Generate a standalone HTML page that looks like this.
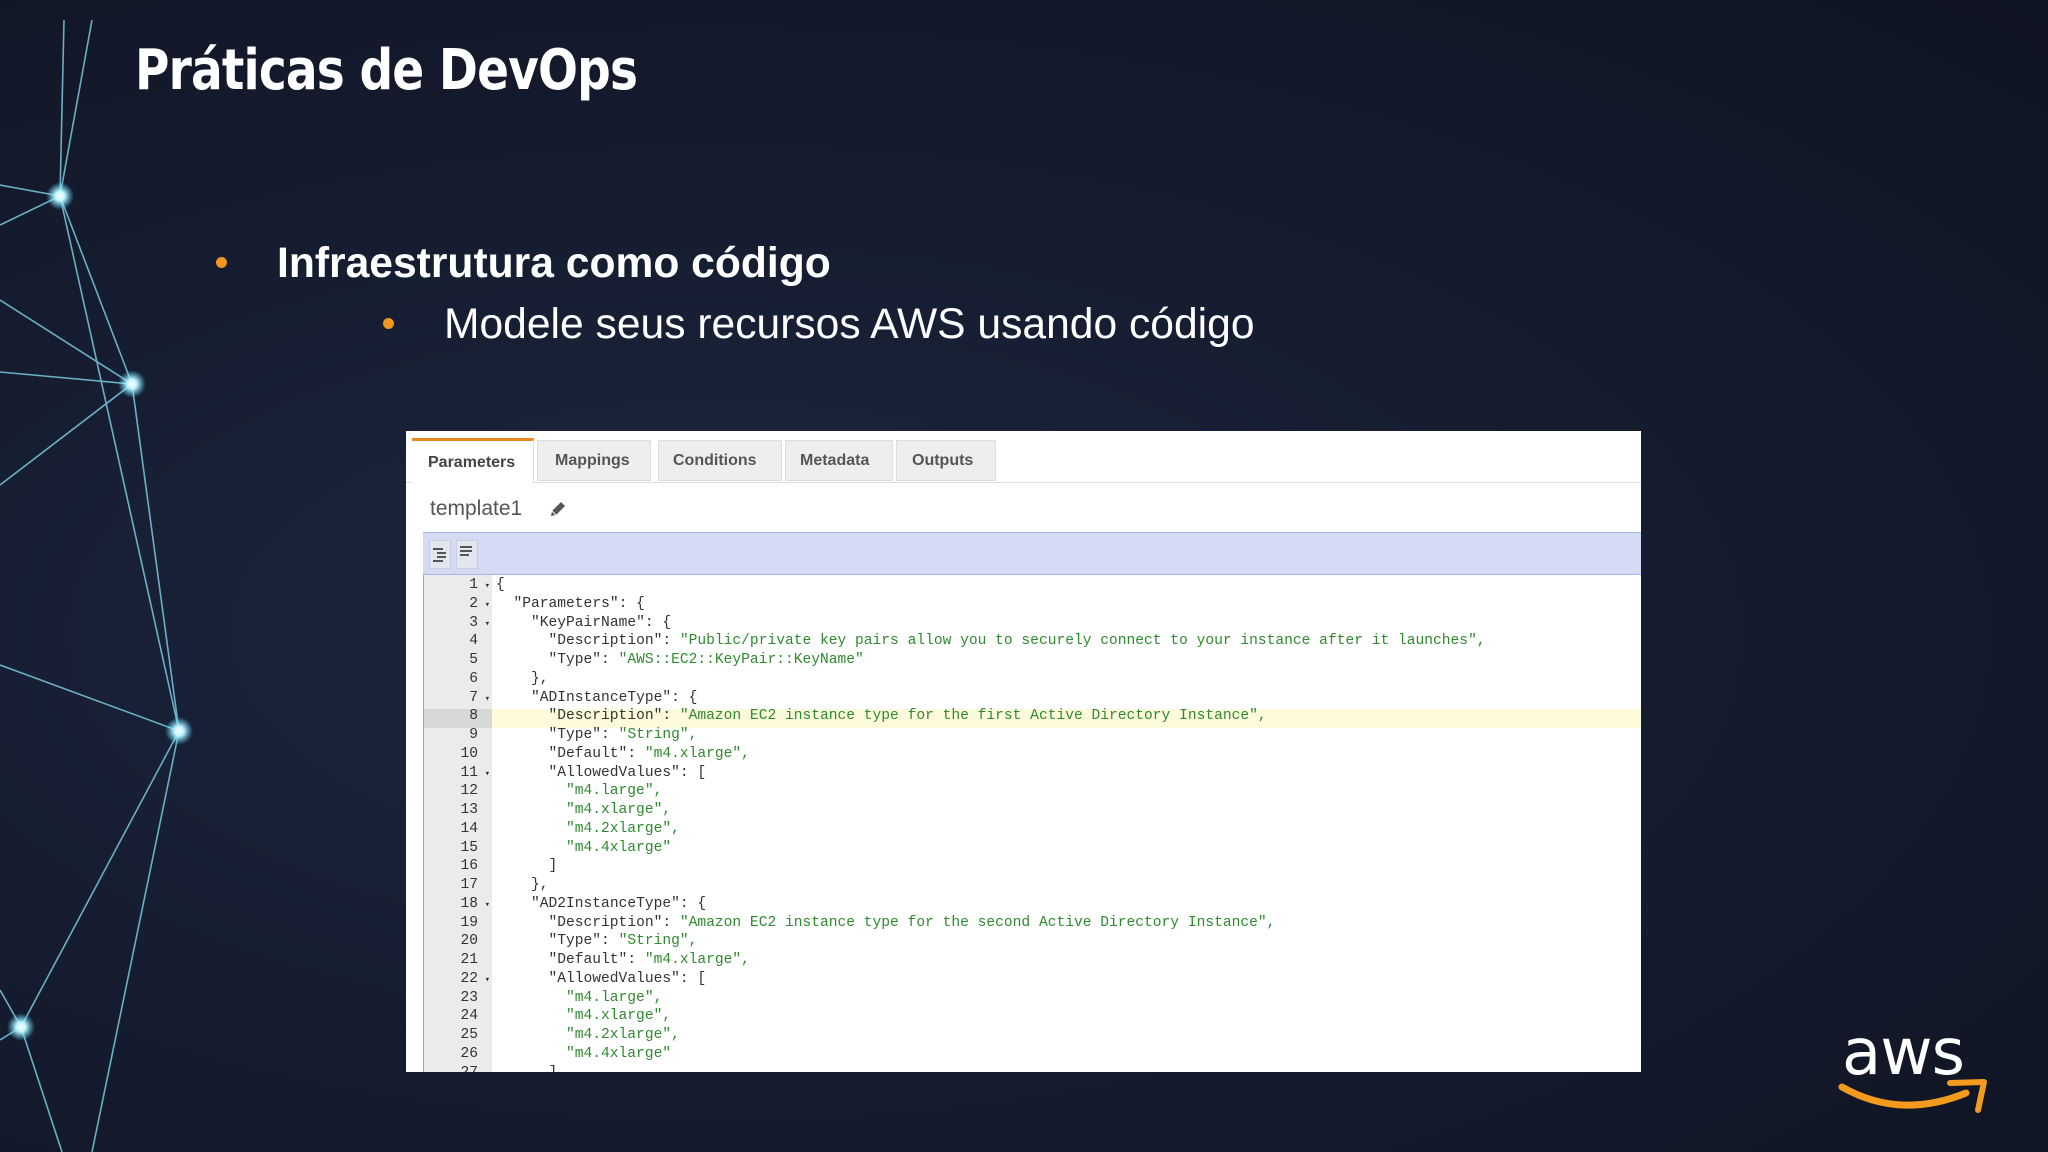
<!DOCTYPE html>
<html><head><meta charset="utf-8"><style>
*{margin:0;padding:0;box-sizing:border-box}
body{width:2048px;height:1152px;overflow:hidden;position:relative;background:radial-gradient(ellipse at 35% 55%,#1d2740 0%,#161d31 45%,#0f1422 100%);font-family:"Liberation Sans",sans-serif}
.abs{position:absolute}
.t{color:#fff;white-space:nowrap}
.code{font-family:"Liberation Mono",monospace;font-size:14.6px;color:#333;white-space:pre}
.s{color:#2e8b2e}
.ln{position:absolute;left:18px;width:68px;text-align:right;padding-right:14px;font-family:"Liberation Mono",monospace;font-size:14.6px;color:#333}
</style></head><body>
<svg class="abs" style="left:0;top:0" width="300" height="1152">
<defs><radialGradient id="g"><stop offset="0" stop-color="#fff"/><stop offset=".35" stop-color="#bff4ff"/><stop offset="1" stop-color="#4fd6ff" stop-opacity="0"/></radialGradient></defs>
<g stroke="#7fd4ea" stroke-width="1.6" opacity=".8" fill="none">
<path d="M64 20L60 196M92 20L60 196M0 185L60 196M0 225L60 196M60 196L132 384M60 196L179 731M0 300L132 384M0 372L132 384M0 485L132 384M132 384L179 731M0 665L179 731M179 731L21 1027M179 731L92 1152M21 1027L62 1152M21 1027L0 990M21 1027L0 1040"/>
</g>
<circle cx="60" cy="196" r="14" fill="url(#g)"/><circle cx="132" cy="384" r="14" fill="url(#g)"/><circle cx="179" cy="731" r="14" fill="url(#g)"/><circle cx="21" cy="1027" r="14" fill="url(#g)"/>
</svg>
<div class="abs t" style="left:135px;top:38px;font-size:56px;font-weight:bold;font-family:'DejaVu Sans','Liberation Sans',sans-serif;letter-spacing:-1px;transform:scaleX(.84);transform-origin:left">Práticas de DevOps</div>
<div class="abs" style="left:216px;top:257px;width:11px;height:11px;border-radius:50%;background:#f0961e"></div>
<div class="abs t" style="left:277px;top:239px;font-size:42.6px;font-weight:bold">Infraestrutura como código</div>
<div class="abs" style="left:383px;top:318px;width:11px;height:11px;border-radius:50%;background:#f0961e"></div>
<div class="abs t" style="left:444px;top:300px;font-size:42.6px">Modele seus recursos AWS usando código</div>

<div class="abs" style="left:406px;top:431px;width:1235px;height:641px;background:#fff;overflow:hidden">
 <div class="abs" style="left:0;top:51px;width:1235px;height:1px;background:#ddd"></div>
 <div class="abs" style="left:6px;top:7px;width:122px;height:45px;background:#fff;border-top:3px solid #e8871e;border-right:1px solid #ddd"></div>
 <div class="abs" style="left:22px;top:23px;font-size:16px;font-weight:bold;color:#444">Parameters</div>
 <div class="abs" style="left:131px;top:9px;width:114px;height:41px;background:#eee;border:1px solid #ddd"></div>
 <div class="abs" style="left:149px;top:21px;font-size:16px;font-weight:bold;color:#555">Mappings</div>
 <div class="abs" style="left:252px;top:9px;width:124px;height:41px;background:#eee;border:1px solid #ddd"></div>
 <div class="abs" style="left:267px;top:21px;font-size:16px;font-weight:bold;color:#555">Conditions</div>
 <div class="abs" style="left:379px;top:9px;width:108px;height:41px;background:#eee;border:1px solid #ddd"></div>
 <div class="abs" style="left:394px;top:21px;font-size:16px;font-weight:bold;color:#555">Metadata</div>
 <div class="abs" style="left:490px;top:9px;width:100px;height:41px;background:#eee;border:1px solid #ddd"></div>
 <div class="abs" style="left:506px;top:21px;font-size:16px;font-weight:bold;color:#555">Outputs</div>
 <div class="abs" style="left:24px;top:66px;font-size:21px;color:#555">template1</div>
 <svg class="abs" style="left:142px;top:68px" width="20" height="20" viewBox="0 0 20 20"><path d="M3 17l1-5L13 3l4 4-9 9z" fill="#555"/><path d="M4 12l4 4" stroke="#fff" stroke-width="1"/></svg>
 <div class="abs" style="left:17px;top:101px;width:1218px;height:43px;background:#d5dbf5;border-top:1px solid #a8b6ee;border-bottom:1px solid #a8b6ee"></div>
 <div class="abs" style="left:23px;top:109px;width:22px;height:29px;background:#e4e6ee;border:1px solid #c8cce0"></div>
 <div class="abs" style="left:50px;top:109px;width:22px;height:29px;background:#e4e6ee;border:1px solid #c8cce0"></div>
 <svg class="abs" style="left:23px;top:109px" width="50" height="29"><g stroke="#555" stroke-width="2"><path d="M4 9h10M8 13h9M8 17h9M4 21h10"/><path d="M31 7h12M31 11h12M31 15h9"/></g></svg>
 <div class="abs" style="left:17px;top:144px;width:1px;height:497px;background:#8fa2e8"></div>
 <div class="abs" style="left:18px;top:144px;width:68px;height:497px;background:#ebebeb"></div>
 <div class="abs" style="left:18px;top:278px;width:68px;height:19px;background:#d8d8d8"></div>
 <div class="abs" style="left:86px;top:278px;width:1149px;height:19px;background:#fdfbdc"></div>
 <div id="code"></div>
</div>
<script>
var L=[[0,'{'],[1,'"Parameters": {'],[2,'"KeyPairName": {'],[3,'"Description": ','"Public/private key pairs allow you to securely connect to your instance after it launches",'],[3,'"Type": ','"AWS::EC2::KeyPair::KeyName"'],[2,'},'],[2,'"ADInstanceType": {'],[3,'"Description": ','"Amazon EC2 instance type for the first Active Directory Instance",'],[3,'"Type": ','"String",'],[3,'"Default": ','"m4.xlarge",'],[3,'"AllowedValues": ['],[4,'','"m4.large",'],[4,'','"m4.xlarge",'],[4,'','"m4.2xlarge",'],[4,'','"m4.4xlarge"'],[3,']'],[2,'},'],[2,'"AD2InstanceType": {'],[3,'"Description": ','"Amazon EC2 instance type for the second Active Directory Instance",'],[3,'"Type": ','"String",'],[3,'"Default": ','"m4.xlarge",'],[3,'"AllowedValues": ['],[4,'','"m4.large",'],[4,'','"m4.xlarge",'],[4,'','"m4.2xlarge",'],[4,'','"m4.4xlarge"'],[3,']']];
var fold={1:1,2:1,3:1,7:1,11:1,18:1,22:1};var h='';
L.forEach(function(l,i){var y=146+i*18.75;var n=i+1;
h+='<div class="ln" style="top:'+y+'px;height:19px;overflow:hidden">'+n+(fold[n]?'<span style="font-size:9px;position:absolute;right:2px;top:4px">▾</span>':'')+'</div>';
h+='<div class="abs code" style="left:'+(90+l[0]*17.5)+'px;top:'+y+'px">'+l[1]+(l[2]?'<span class="s">'+l[2]+'</span>':'')+'</div>';});
document.getElementById('code').innerHTML=h;
</script>
<div class="abs t" style="left:1842px;top:1016px;font-size:64px;letter-spacing:-1px;font-family:'DejaVu Sans',sans-serif">aws</div>
<svg class="abs" style="left:1838px;top:1075px" width="150" height="45" viewBox="0 0 150 45"><path d="M4 12Q62 45 128 18" stroke="#f39a1f" stroke-width="7" fill="none" stroke-linecap="round"/><path d="M112 8L146 7 140 35" stroke="#f39a1f" stroke-width="6" fill="none" stroke-linejoin="round" stroke-linecap="round"/></svg>
</body></html>
